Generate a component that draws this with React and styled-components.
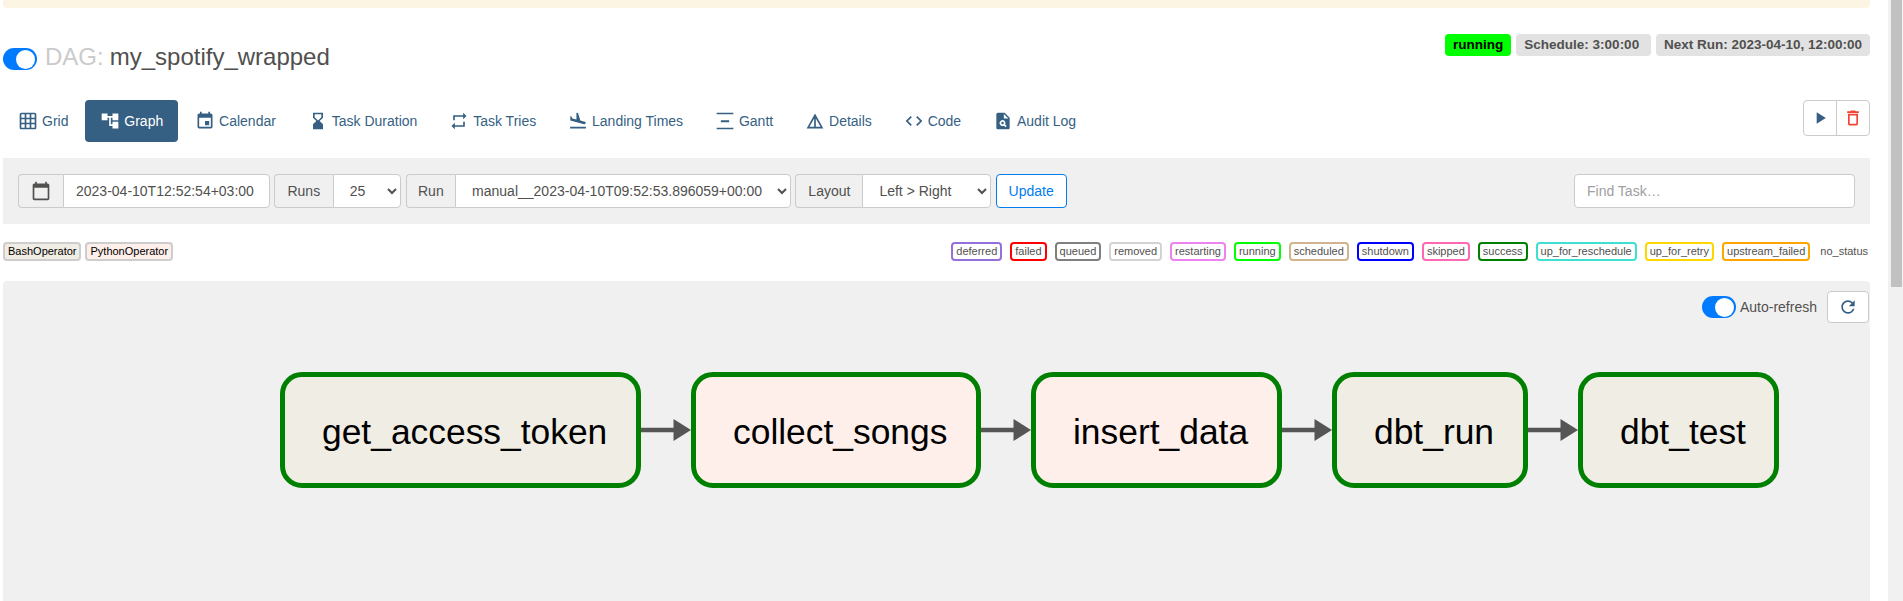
import React from "react";
import styled, { createGlobalStyle } from "styled-components";
import {
  MdGridOn,
  MdAccountTree,
  MdEvent,
  MdHourglassBottom,
  MdRepeat,
  MdFlightLand,
  MdDetails,
  MdCode,
  MdPlagiarism,
  MdPlayArrow,
  MdDeleteOutline,
  MdCalendarToday,
  MdRefresh,
} from "react-icons/md";

const GlobalStyle = createGlobalStyle`
  html, body {
    margin: 0;
    padding: 0;
    height: 100%;
    overflow: hidden;
    background: #fff;
    font-family: "Liberation Sans", Arial, sans-serif;
    font-size: 14px;
    color: #51504f;
  }
  * { box-sizing: border-box; }
`;

const GanttIcon = () => (
  <svg viewBox="0 0 24 24" fill="currentColor">
    <path d="M2 2h20v2H2zM2 20h20v2H2zM7 11h10v2.4H7z" />
  </svg>
);

const tabs = [
  { label: "Grid", Icon: MdGridOn },
  { label: "Graph", Icon: MdAccountTree, active: true },
  { label: "Calendar", Icon: MdEvent },
  { label: "Task Duration", Icon: MdHourglassBottom },
  { label: "Task Tries", Icon: MdRepeat },
  { label: "Landing Times", Icon: MdFlightLand },
  { label: "Gantt", Icon: GanttIcon },
  { label: "Details", Icon: MdDetails },
  { label: "Code", Icon: MdCode },
  { label: "Audit Log", Icon: MdPlagiarism },
];

const states = [
  { name: "deferred", color: "#9370db" },
  { name: "failed", color: "#ff0000" },
  { name: "queued", color: "#808080" },
  { name: "removed", color: "#d3d3d3" },
  { name: "restarting", color: "#ee82ee" },
  { name: "running", color: "#00ff00" },
  { name: "scheduled", color: "#d2b48c" },
  { name: "shutdown", color: "#0000ff" },
  { name: "skipped", color: "#ff69b4" },
  { name: "success", color: "#008000" },
  { name: "up_for_reschedule", color: "#40e0d0" },
  { name: "up_for_retry", color: "#ffd700" },
  { name: "upstream_failed", color: "#ffa500" },
];

const tasks = [
  { name: "get_access_token", bg: "#f0ede4", width: 361 },
  { name: "collect_songs", bg: "#ffefeb", width: 290 },
  { name: "insert_data", bg: "#ffefeb", width: 251 },
  { name: "dbt_run", bg: "#f0ede4", width: 196 },
  { name: "dbt_test", bg: "#f0ede4", width: 201 },
];

const Switch = () => (
  <SwitchTrack>
    <SwitchKnob />
  </SwitchTrack>
);

const Arrow = () => (
  <ArrowBox viewBox="0 0 50 22">
    <path d="M0 8.8h34v4.4H0z" fill="#555" />
    <path d="M32.5 0L50 11 32.5 22z" fill="#555" />
  </ArrowBox>
);

export default function App() {
  return (
    <Page>
      <GlobalStyle />
      <Banner />
      <Header>
        <Title>
          <Switch />
          <TitleMuted>DAG:</TitleMuted>
          <TitleName>my_spotify_wrapped</TitleName>
        </Title>
        <Badges>
          <Badge $running>running</Badge>
          <Badge>{"Schedule: 3:00:00 "}</Badge>
          <Badge>Next Run: 2023-04-10, 12:00:00</Badge>
        </Badges>
      </Header>

      <NavRow>
        <Tabs>
          {tabs.map(({ label, Icon, active }) => (
            <Tab key={label} $active={active}>
              <Icon />
              {label}
            </Tab>
          ))}
        </Tabs>
        <ActionGroup>
          <ActionButton>
            <MdPlayArrow />
          </ActionButton>
          <ActionButton $danger>
            <MdDeleteOutline />
          </ActionButton>
        </ActionGroup>
      </NavRow>

      <Toolbar>
        <Controls>
          <InputGroup>
            <Addon $width={45}>
              <MdCalendarToday />
            </Addon>
            <TextInput $width={206.5} defaultValue="2023-04-10T12:52:54+03:00" />
          </InputGroup>
          <InputGroup>
            <Addon $width={59}>Runs</Addon>
            <Select $width={68.5} defaultValue="25">
              <option>25</option>
            </Select>
          </InputGroup>
          <InputGroup>
            <Addon $width={49.5}>Run</Addon>
            <Select $width={336}>
              <option>manual__2023-04-10T09:52:53.896059+00:00</option>
            </Select>
          </InputGroup>
          <InputGroup>
            <Addon $width={67}>Layout</Addon>
            <Select $width={129}>
              <option>{"Left > Right"}</option>
            </Select>
          </InputGroup>
          <UpdateButton>Update</UpdateButton>
        </Controls>
        <TextInput $width={281} $alone placeholder="Find Task…" />
      </Toolbar>

      <LegendRow>
        <LegendGroup>
          <OperatorChip $bg="#f0ede4">BashOperator</OperatorChip>
          <OperatorChip $bg="#ffefeb">PythonOperator</OperatorChip>
        </LegendGroup>
        <StateGroup>
          {states.map((s) => (
            <StateChip key={s.name} $color={s.color}>
              {s.name}
            </StateChip>
          ))}
          <NoStatus>no_status</NoStatus>
        </StateGroup>
      </LegendRow>

      <GraphPanel>
        <RefreshBar>
          <Switch />
          <RefreshLabel>Auto-refresh</RefreshLabel>
          <RefreshButton>
            <MdRefresh />
          </RefreshButton>
        </RefreshBar>
        <GraphRow>
          {tasks.map((t, i) => (
            <React.Fragment key={t.name}>
              {i > 0 && <Arrow />}
              <TaskNode $bg={t.bg} $width={t.width}>
                {t.name}
              </TaskNode>
            </React.Fragment>
          ))}
        </GraphRow>
      </GraphPanel>

      <ScrollTrack>
        <ScrollThumb />
      </ScrollTrack>
    </Page>
  );
}

const Page = styled.div`
  display: flex;
  flex-direction: column;
  height: 100vh;
  overflow: hidden;
  padding: 0 33px 0 3px;
`;

const ScrollTrack = styled.div`
  position: fixed;
  top: 0;
  right: 0;
  bottom: 0;
  width: 15px;
  padding: 0 1px 0 3px;
  background: #f1f1f1;
`;

const ScrollThumb = styled.div`
  height: 287px;
  background: #c1c1c1;
`;

const Banner = styled.div`
  flex: none;
  height: 8px;
  background: #fdf5e3;
  border-radius: 0 0 4px 4px;
`;

const Header = styled.div`
  flex: none;
  height: 92px;
  padding-top: 26px;
  display: flex;
  justify-content: space-between;
  align-items: flex-start;
`;

const Title = styled.h4`
  margin: 10px 0 0;
  display: flex;
  align-items: center;
  height: 30px;
  font-size: 24px;
  font-weight: 400;
  line-height: 30px;
`;

const TitleMuted = styled.span`
  margin-left: 8px;
  padding-bottom: 4px;
  color: #cbcbcb;
`;

const TitleName = styled.span`
  margin-left: 6px;
  padding-bottom: 4px;
`;

const SwitchTrack = styled.span`
  display: inline-flex;
  justify-content: flex-end;
  align-items: center;
  flex: none;
  width: 34px;
  height: 22px;
  padding-right: 2px;
  border-radius: 11px;
  background: #007bff;
`;

const SwitchKnob = styled.span`
  width: 19px;
  height: 19px;
  border-radius: 50%;
  background: #fff;
`;

const Badges = styled.div`
  display: flex;
  gap: 5px;
`;

const Badge = styled.span`
  height: 22px;
  padding: 0 8px;
  border-radius: 4px;
  font-size: 13.5px;
  font-weight: 700;
  line-height: 22px;
  white-space: pre;
  color: ${(p) => (p.$running ? "#000" : "#51504f")};
  background: ${(p) => (p.$running ? "#00ff00" : "#e2e2e2")};
`;

const NavRow = styled.div`
  flex: none;
  display: flex;
  justify-content: space-between;
  align-items: flex-start;
  height: 42px;
`;

const Tabs = styled.nav`
  display: flex;
  gap: 1.85px;
`;

const Tab = styled.a`
  display: flex;
  align-items: center;
  gap: 4px;
  height: 42px;
  padding: 0 15px;
  border-radius: 4px;
  color: ${(p) => (p.$active ? "#fff" : "#365f84")};
  background: ${(p) => (p.$active ? "#365f84" : "transparent")};

  svg {
    width: 20px;
    height: 20px;
    flex: none;
  }
`;

const ActionGroup = styled.div`
  display: flex;
  height: 36px;
  border: 1px solid #cbcbcb;
  border-radius: 4px;
  background: #fff;
`;

const ActionButton = styled.button`
  display: flex;
  align-items: center;
  justify-content: center;
  width: ${(p) => (p.$danger ? "33px" : "32px")};
  padding: 0;
  border: none;
  border-left: ${(p) => (p.$danger ? "1px solid #cbcbcb" : "none")};
  background: transparent;
  color: ${(p) => (p.$danger ? "#f44336" : "#365f84")};

  svg {
    width: 20px;
    height: 20px;
  }
`;

const Toolbar = styled.div`
  flex: none;
  display: flex;
  justify-content: space-between;
  align-items: center;
  height: 66px;
  margin-top: 16px;
  padding: 0 15px;
  background: #f0f0f0;
`;

const Controls = styled.div`
  display: flex;
  gap: 4.3px;
`;

const InputGroup = styled.div`
  display: flex;
  height: 34px;
`;

const Addon = styled.span`
  display: flex;
  align-items: center;
  justify-content: center;
  width: ${(p) => p.$width}px;
  border: 1px solid #cbcbcb;
  border-right: none;
  border-radius: 4px 0 0 4px;
  background: #f0f0f0;
  color: #51504f;

  svg {
    width: 20px;
    height: 20px;
  }
`;

const TextInput = styled.input`
  width: ${(p) => p.$width}px;
  height: 34px;
  padding: 0 12px;
  border: 1px solid #cbcbcb;
  border-radius: ${(p) => (p.$alone ? "4px" : "0 4px 4px 0")};
  background: #fff;
  color: #51504f;
  font: 14px "Liberation Sans", Arial, sans-serif;

  &::placeholder {
    color: #a0a0a0;
    opacity: 1;
  }
`;

const Select = styled.select`
  width: ${(p) => p.$width}px;
  height: 34px;
  padding: 0 12px;
  border: 1px solid #cbcbcb;
  border-radius: 0 4px 4px 0;
  background: #fff;
  color: #51504f;
  font: 14px "Liberation Sans", Arial, sans-serif;
`;

const UpdateButton = styled.button`
  width: 71px;
  height: 34px;
  padding: 0;
  border: 1px solid #017cee;
  border-radius: 4px;
  background: #fff;
  color: #017cee;
  font: 14px "Liberation Sans", Arial, sans-serif;
`;

const LegendRow = styled.div`
  flex: none;
  display: flex;
  justify-content: space-between;
  margin-top: 18px;
`;

const LegendGroup = styled.div`
  display: flex;
  gap: 4px;
`;

const StateGroup = styled.div`
  display: flex;
  gap: 8px;
`;

const OperatorChip = styled.span`
  height: 19px;
  padding: 0 3px;
  border: 2px solid #cdcdcd;
  border-radius: 4px;
  background: ${(p) => p.$bg};
  color: #000;
  font-size: 11px;
  line-height: 15px;
`;

const StateChip = styled.span`
  height: 19px;
  padding: 0 3px;
  border: 2px solid ${(p) => p.$color};
  border-radius: 4px;
  background: #fff;
  font-size: 11px;
  line-height: 15px;
`;

const NoStatus = styled.span`
  padding: 0 2px;
  font-size: 11px;
  line-height: 19px;
`;

const GraphPanel = styled.section`
  flex: 1;
  margin-top: 20px;
  padding-top: 10px;
  border-radius: 4px 4px 0 0;
  background: #f0f0f0;
`;

const RefreshBar = styled.div`
  display: flex;
  justify-content: flex-end;
  align-items: center;
  height: 32px;
  padding-right: 1px;
`;

const RefreshLabel = styled.span`
  margin: 0 10px 0 4px;
`;

const RefreshButton = styled.button`
  display: flex;
  align-items: center;
  justify-content: center;
  width: 42px;
  height: 32px;
  padding: 0;
  border: 1px solid #cbcbcb;
  border-radius: 4px;
  background: #fff;
  color: #365f84;

  svg {
    width: 20px;
    height: 20px;
  }
`;

const GraphRow = styled.div`
  display: flex;
  align-items: center;
  margin: 49px 0 0 277px;
`;

const TaskNode = styled.div`
  flex: none;
  width: ${(p) => p.$width}px;
  height: 116px;
  padding: 5px 0 0 37px;
  border: 5px solid #008000;
  border-radius: 22px;
  background: ${(p) => p.$bg};
  color: #000;
  font-size: 35.4px;
  line-height: 101px;
`;

const ArrowBox = styled.svg`
  flex: none;
  width: 50px;
  height: 22px;
`;
